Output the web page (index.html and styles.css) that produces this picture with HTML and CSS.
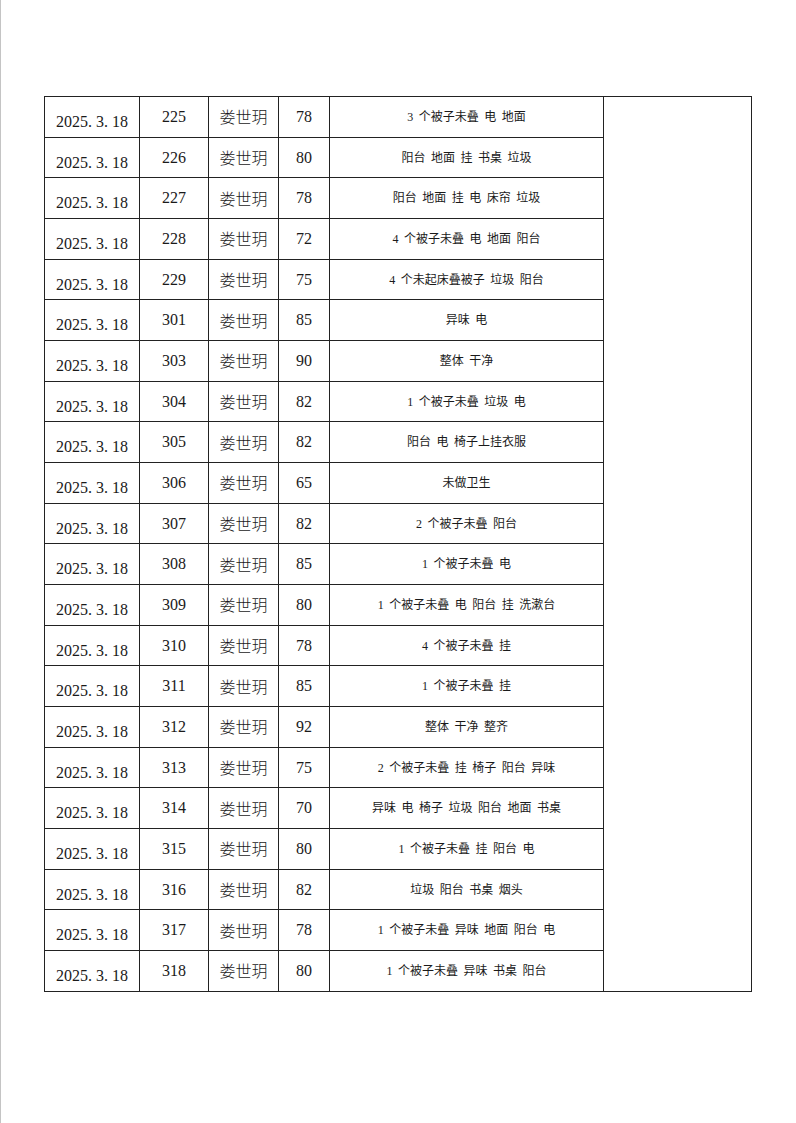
FILE: index.html
```html
<!DOCTYPE html>
<html lang="zh">
<head>
<meta charset="utf-8">
<link rel="stylesheet" href="styles.css">
</head>
<body>
<div class="page">
<table class="sheet">
<colgroup>
<col class="c-date"><col class="c-room"><col class="c-name"><col class="c-score"><col class="c-note"><col class="c-extra">
</colgroup>
<tbody>
<tr><td class="date">2025<span class="dt">.</span>3<span class="dt">.</span>18</td><td class="num">225</td><td class="name">娄世玥</td><td class="num">78</td><td class="note">3 个被子未叠 电 地面</td><td class="extra" rowspan="22"></td></tr>
<tr><td class="date">2025<span class="dt">.</span>3<span class="dt">.</span>18</td><td class="num">226</td><td class="name">娄世玥</td><td class="num">80</td><td class="note">阳台 地面 挂 书桌 垃圾</td></tr>
<tr><td class="date">2025<span class="dt">.</span>3<span class="dt">.</span>18</td><td class="num">227</td><td class="name">娄世玥</td><td class="num">78</td><td class="note">阳台 地面 挂 电 床帘 垃圾</td></tr>
<tr><td class="date">2025<span class="dt">.</span>3<span class="dt">.</span>18</td><td class="num">228</td><td class="name">娄世玥</td><td class="num">72</td><td class="note">4 个被子未叠 电 地面 阳台</td></tr>
<tr><td class="date">2025<span class="dt">.</span>3<span class="dt">.</span>18</td><td class="num">229</td><td class="name">娄世玥</td><td class="num">75</td><td class="note">4 个未起床叠被子 垃圾 阳台</td></tr>
<tr><td class="date">2025<span class="dt">.</span>3<span class="dt">.</span>18</td><td class="num">301</td><td class="name">娄世玥</td><td class="num">85</td><td class="note">异味 电</td></tr>
<tr><td class="date">2025<span class="dt">.</span>3<span class="dt">.</span>18</td><td class="num">303</td><td class="name">娄世玥</td><td class="num">90</td><td class="note">整体 干净</td></tr>
<tr><td class="date">2025<span class="dt">.</span>3<span class="dt">.</span>18</td><td class="num">304</td><td class="name">娄世玥</td><td class="num">82</td><td class="note">1 个被子未叠 垃圾 电</td></tr>
<tr><td class="date">2025<span class="dt">.</span>3<span class="dt">.</span>18</td><td class="num">305</td><td class="name">娄世玥</td><td class="num">82</td><td class="note">阳台 电 椅子上挂衣服</td></tr>
<tr><td class="date">2025<span class="dt">.</span>3<span class="dt">.</span>18</td><td class="num">306</td><td class="name">娄世玥</td><td class="num">65</td><td class="note">未做卫生</td></tr>
<tr><td class="date">2025<span class="dt">.</span>3<span class="dt">.</span>18</td><td class="num">307</td><td class="name">娄世玥</td><td class="num">82</td><td class="note">2 个被子未叠 阳台</td></tr>
<tr><td class="date">2025<span class="dt">.</span>3<span class="dt">.</span>18</td><td class="num">308</td><td class="name">娄世玥</td><td class="num">85</td><td class="note">1 个被子未叠 电</td></tr>
<tr><td class="date">2025<span class="dt">.</span>3<span class="dt">.</span>18</td><td class="num">309</td><td class="name">娄世玥</td><td class="num">80</td><td class="note">1 个被子未叠 电 阳台 挂 洗漱台</td></tr>
<tr><td class="date">2025<span class="dt">.</span>3<span class="dt">.</span>18</td><td class="num">310</td><td class="name">娄世玥</td><td class="num">78</td><td class="note">4 个被子未叠 挂</td></tr>
<tr><td class="date">2025<span class="dt">.</span>3<span class="dt">.</span>18</td><td class="num">311</td><td class="name">娄世玥</td><td class="num">85</td><td class="note">1 个被子未叠 挂</td></tr>
<tr><td class="date">2025<span class="dt">.</span>3<span class="dt">.</span>18</td><td class="num">312</td><td class="name">娄世玥</td><td class="num">92</td><td class="note">整体 干净 整齐</td></tr>
<tr><td class="date">2025<span class="dt">.</span>3<span class="dt">.</span>18</td><td class="num">313</td><td class="name">娄世玥</td><td class="num">75</td><td class="note">2 个被子未叠 挂 椅子 阳台 异味</td></tr>
<tr><td class="date">2025<span class="dt">.</span>3<span class="dt">.</span>18</td><td class="num">314</td><td class="name">娄世玥</td><td class="num">70</td><td class="note">异味 电 椅子 垃圾 阳台 地面 书桌</td></tr>
<tr><td class="date">2025<span class="dt">.</span>3<span class="dt">.</span>18</td><td class="num">315</td><td class="name">娄世玥</td><td class="num">80</td><td class="note">1 个被子未叠 挂 阳台 电</td></tr>
<tr><td class="date">2025<span class="dt">.</span>3<span class="dt">.</span>18</td><td class="num">316</td><td class="name">娄世玥</td><td class="num">82</td><td class="note">垃圾 阳台 书桌 烟头</td></tr>
<tr><td class="date">2025<span class="dt">.</span>3<span class="dt">.</span>18</td><td class="num">317</td><td class="name">娄世玥</td><td class="num">78</td><td class="note">1 个被子未叠 异味 地面 阳台 电</td></tr>
<tr><td class="date">2025<span class="dt">.</span>3<span class="dt">.</span>18</td><td class="num">318</td><td class="name">娄世玥</td><td class="num">80</td><td class="note">1 个被子未叠 异味 书桌 阳台</td></tr>
</tbody>
</table>
</div>
</body>
</html>
```

FILE: styles.css
```css
html, body {
  margin: 0;
  padding: 0;
  background: #ffffff;
}

.page {
  width: 796px;
  height: 1123px;
  border-left: 1px solid #c4c4c4;
  padding: 96px 0 0 43px;
  box-sizing: border-box;
  font-family: "Liberation Serif", "Noto Sans CJK SC", serif;
  color: #1a1a1a;
}

.sheet {
  border-collapse: collapse;
  table-layout: fixed;
  width: 707px;
}

.c-date { width: 95px; }
.c-room { width: 69px; }
.c-name { width: 70px; }
.c-score { width: 51px; }
.c-note { width: 274px; }
.c-extra { width: 148px; }

.sheet td {
  border: 1px solid #222222;
  height: 40.68px;
  padding: 0;
  text-align: center;
  vertical-align: middle;
  box-sizing: border-box;
  line-height: 1;
  white-space: nowrap;
}

.sheet td.date {
  font-size: 16px;
  padding-top: 10px;
}

.dt {
  margin-right: 4px;
}

.sheet td.num {
  font-size: 16px;
}

.sheet td.name {
  font-family: "Noto Sans CJK SC", sans-serif;
  font-size: 16px;
  font-weight: 300;
  padding-bottom: 1px;
}

.sheet td.note {
  font-size: 12px;
  word-spacing: 2.5px;
}

.sheet td.extra {
  vertical-align: top;
}
```
